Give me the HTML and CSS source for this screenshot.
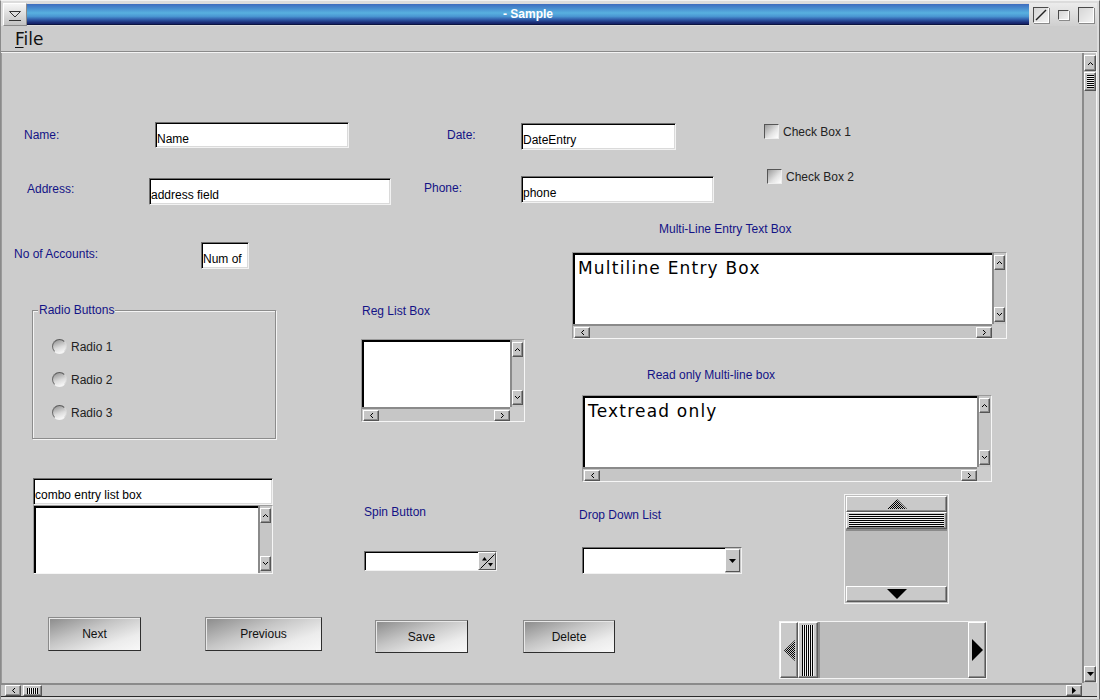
FILE: index.html
```html
<!DOCTYPE html>
<html>
<head>
<meta charset="utf-8">
<title>Sample</title>
<link rel="stylesheet" href="styles.css">
</head>
<body>
<svg class="defs" width="0" height="0" aria-hidden="true">
  <defs>
    <pattern id="dither" width="2" height="2" patternUnits="userSpaceOnUse">
      <rect width="2" height="2" fill="#c8c8c8"/>
      <rect width="1" height="1" fill="#000"/>
      <rect x="1" y="1" width="1" height="1" fill="#000"/>
    </pattern>
    <symbol id="chev-up" viewBox="0 0 7 5"><path d="M1 4 L3.5 1.5 L6 4" stroke="#000" stroke-width="1" fill="none"/></symbol>
    <symbol id="chev-down" viewBox="0 0 7 5"><path d="M1 1 L3.5 3.5 L6 1" stroke="#000" stroke-width="1" fill="none"/></symbol>
    <symbol id="chev-left" viewBox="0 0 5 7"><path d="M4 1 L1.5 3.5 L4 6" stroke="#000" stroke-width="1" fill="none"/></symbol>
    <symbol id="chev-right" viewBox="0 0 5 7"><path d="M1 1 L3.5 3.5 L1 6" stroke="#000" stroke-width="1" fill="none"/></symbol>
    <symbol id="tri-down" viewBox="0 0 7 4"><path d="M0 0 H7 L3.5 4 Z" fill="#000"/></symbol>
    <symbol id="tri-right" viewBox="0 0 4 7"><path d="M0 0 V7 L4 3.5 Z" fill="#000"/></symbol>
  </defs>
</svg>

<div class="window">
  <div class="titlebar">
    <div class="tb-menu">
      <svg width="22" height="21" viewBox="0 0 22 21"><path d="M5.5 7.5 H16.5 L11 13 Z" fill="none" stroke="#333" stroke-width="1"/><path d="M5 16.5 H17" stroke="#333" stroke-width="1"/></svg>
    </div>
    <div class="tb-title">- Sample</div>
    <div class="tb-btns">
      <div class="tb-btn tb-shade"><svg width="14" height="14" viewBox="0 0 14 14"><path d="M2 12 L12 2" stroke="#222" stroke-width="1.4"/></svg></div>
      <div class="tb-btn tb-min"></div>
      <div class="tb-btn tb-max"></div>
    </div>
  </div>

  <div class="menubar"><span class="menu-item"><span class="mnemonic">F</span>ile</span></div>
  <div class="menusep"></div>

  <div class="viewport">
    <div class="canvas">
      <div class="row row1">
        <div class="lbl l-name">Name:</div>
        <div class="field f-name">Name</div>
        <div class="lbl l-date">Date:</div>
        <div class="field f-date">DateEntry</div>
        <div class="check c1"><span class="cbox"></span><span class="ctext">Check Box 1</span></div>
      </div>

      <div class="row row2">
        <div class="lbl l-addr">Address:</div>
        <div class="field f-addr">address field</div>
        <div class="lbl l-phone">Phone:</div>
        <div class="field f-phone">phone</div>
        <div class="check c2"><span class="cbox"></span><span class="ctext">Check Box 2</span></div>
      </div>

      <div class="mid">
        <div class="col col-l">
          <div class="acc-row">
            <div class="lbl l-acc">No of Accounts:</div>
            <div class="field f-acc">Num of</div>
          </div>
          <div class="group">
            <span class="legend">Radio Buttons</span>
            <div class="radio"><span class="rdot"></span><span class="ctext">Radio 1</span></div>
            <div class="radio"><span class="rdot"></span><span class="ctext">Radio 2</span></div>
            <div class="radio"><span class="rdot"></span><span class="ctext">Radio 3</span></div>
          </div>
          <div class="combo">
            <div class="field f-combo">combo entry list box</div>
            <div class="pane pane-combo">
              <div class="pane-text"></div>
              <div class="pane-v">
                <span class="sb sb-v"><svg width="7" height="5"><use href="#chev-up"/></svg></span>
                <span class="sb sb-v"><svg width="7" height="5"><use href="#chev-down"/></svg></span>
              </div>
            </div>
          </div>
        </div>

        <div class="col col-m">
          <div class="lbl l-reg">Reg List Box</div>
          <div class="pane pane-reg">
            <div class="pane-text"></div>
            <div class="pane-v">
              <span class="sb sb-v"><svg width="7" height="5"><use href="#chev-up"/></svg></span>
              <span class="sb sb-v"><svg width="7" height="5"><use href="#chev-down"/></svg></span>
            </div>
            <div class="pane-h">
              <span class="sb sb-h"><svg width="5" height="7"><use href="#chev-left"/></svg></span>
              <span class="sb sb-h"><svg width="5" height="7"><use href="#chev-right"/></svg></span>
            </div>
            <div class="pane-corner"></div>
          </div>
          <div class="lbl l-spin">Spin Button</div>
          <div class="spin">
            <div class="spin-text"></div>
            <div class="spin-btn"><svg width="15" height="15" viewBox="0 0 15 15"><path d="M0.5 14.5 L14.5 0.5" stroke="#000" stroke-width="1"/><path d="M2 6.5 L4.5 3 L7 6.5 Z" fill="#000"/><path d="M8 9 H13 L10.5 12.5 Z" fill="#000"/></svg></div>
          </div>
        </div>

        <div class="col col-r">
          <div class="lbl l-ml">Multi-Line Entry Text Box</div>
          <div class="pane pane-ml">
            <div class="pane-text big">Multiline Entry Box</div>
            <div class="pane-v">
              <span class="sb sb-v"><svg width="7" height="5"><use href="#chev-up"/></svg></span>
              <span class="sb sb-v"><svg width="7" height="5"><use href="#chev-down"/></svg></span>
            </div>
            <div class="pane-h">
              <span class="sb sb-h"><svg width="5" height="7"><use href="#chev-left"/></svg></span>
              <span class="sb sb-h"><svg width="5" height="7"><use href="#chev-right"/></svg></span>
            </div>
            <div class="pane-corner"></div>
          </div>
          <div class="lbl l-ro">Read only Multi-line box</div>
          <div class="pane pane-ro">
            <div class="pane-text big">Textread only</div>
            <div class="pane-v">
              <span class="sb sb-v"><svg width="7" height="5"><use href="#chev-up"/></svg></span>
              <span class="sb sb-v"><svg width="7" height="5"><use href="#chev-down"/></svg></span>
            </div>
            <div class="pane-h">
              <span class="sb sb-h"><svg width="5" height="7"><use href="#chev-left"/></svg></span>
              <span class="sb sb-h"><svg width="5" height="7"><use href="#chev-right"/></svg></span>
            </div>
            <div class="pane-corner"></div>
          </div>
          <div class="sub">
            <div class="dd-col">
              <div class="lbl l-dd">Drop Down List</div>
              <div class="dropdown">
                <div class="dd-text"></div>
                <div class="dd-btn"><svg width="7" height="4"><use href="#tri-down"/></svg></div>
              </div>
            </div>
            <div class="bigv">
              <div class="big-btn bv-btn"><svg width="20" height="10" viewBox="0 0 20 10"><path d="M0 10 L10 0 L20 10 Z" fill="url(#dither)"/></svg></div>
              <div class="big-btn bv-thumb"><span class="hstripes"></span></div>
              <div class="bv-track"></div>
              <div class="big-btn bv-btn"><svg width="20" height="10" viewBox="0 0 20 10"><path d="M0 0 H20 L10 10 Z" fill="#000"/></svg></div>
            </div>
          </div>
        </div>
      </div>

      <div class="row row-btns">
        <div class="btn btn-next">Next</div>
        <div class="btn btn-prev">Previous</div>
        <div class="btn btn-save">Save</div>
        <div class="btn btn-del">Delete</div>
        <div class="bigh">
          <div class="big-btn bh-btn"><svg width="11" height="21" viewBox="0 0 11 21"><path d="M11 0 V21 L0 10.5 Z" fill="url(#dither)"/></svg></div>
          <div class="big-btn bh-thumb"><span class="vstripes"></span></div>
          <div class="bh-track"></div>
          <div class="big-btn bh-btn"><svg width="11" height="22" viewBox="0 0 11 22"><path d="M0 0 V22 L11 11 Z" fill="#000"/></svg></div>
        </div>
      </div>
    </div>

    <div class="vbar">
      <span class="sb sb-main-v"><svg width="7" height="5"><use href="#chev-up"/></svg></span>
      <span class="sb sb-main-thumb"><span class="hstripes small"></span></span>
      <span class="vbar-fill"></span>
      <span class="sb sb-main-v"><svg width="7" height="4"><use href="#tri-down"/></svg></span>
    </div>
  </div>

  <div class="hbar-row">
    <div class="hbar">
      <span class="sb sb-main-h"><svg width="5" height="7"><use href="#chev-left"/></svg></span>
      <span class="sb sb-main-hthumb"><span class="vstripes small"></span></span>
      <span class="hbar-fill"></span>
      <span class="sb sb-main-h"><svg width="4" height="7"><use href="#tri-right"/></svg></span>
    </div>
    <div class="corner"></div>
  </div>
</div>
</body>
</html>
```

FILE: styles.css
```css
* { box-sizing: border-box; }

html, body {
  margin: 0;
  padding: 0;
  background: #cccccc;
  font-family: "Liberation Sans", Arial, sans-serif;
}

.defs { position: absolute; width: 0; height: 0; overflow: hidden; }

.window {
  width: 1100px;
  height: 700px;
  display: flex;
  flex-direction: column;
  background: #dcdcdc;
  border-top: 1px solid #f2f2f2;
  border-left: 1px solid #8a8a8a;
  border-right: 1px solid #6a6a6a;
  border-bottom: 1px solid #bdbdbd;
  padding: 2px 2px 2px 0;
  overflow: hidden;
}

/* ---------- title bar ---------- */
.titlebar {
  height: 23px;
  display: flex;
  flex-shrink: 0;
}
.tb-menu {
  width: 24px;
  height: 23px;
  margin-left: 2px;
  background: linear-gradient(to bottom, #f6f6f6, #c2c2c2);
  border: 1px solid;
  border-color: #ffffff #8a8a8a #8a8a8a #ffffff;
  display: flex;
  align-items: center;
  justify-content: center;
}
.tb-title {
  flex: 1;
  margin: 1px 0;
  background: linear-gradient(to bottom, #3d6cbe 0%, #4a92d2 25%, #58b0df 45%, #4a96d2 62%, #2f5aa8 78%, #1c2f78 92%, #142066 100%);
  color: #ffffff;
  font-weight: bold;
  font-size: 12px;
  line-height: 21px;
  text-align: center;
  border-bottom: 1px solid #0c1440;
}
.tb-btns {
  width: 68px;
  display: flex;
  align-items: center;
  background: linear-gradient(to bottom, #ececec, #cfcfcf);
}
.tb-btn {
  border: 1px solid;
  border-color: #4a4a4a #ffffff #ffffff #4a4a4a;
  box-shadow: 1px 1px 0 #8a8a8a;
  background: linear-gradient(135deg, #d6d6d6, #f2f2f2);
  display: flex;
  align-items: center;
  justify-content: center;
}
.tb-shade { width: 16px; height: 16px; margin-left: 4px; }
.tb-min { width: 11px; height: 10px; margin-left: 9px; }
.tb-max { width: 16px; height: 16px; margin-left: 9px; }

/* ---------- menu ---------- */
.menubar {
  height: 25px;
  flex-shrink: 0;
  background: #cccccc;
  padding-left: 14px;
  display: flex;
  align-items: center;
}
.menu-item {
  font-family: "DejaVu Sans", sans-serif;
  font-size: 17px;
  color: #111111;
}
.mnemonic { text-decoration: underline; text-underline-offset: 2px; }
.menusep {
  height: 2px;
  flex-shrink: 0;
  border-top: 1px solid #8a8a8a;
  border-bottom: 1px solid #f4f4f4;
}

/* ---------- viewport ---------- */
.viewport {
  height: 630px;
  display: flex;
  flex-shrink: 0;
}
.canvas {
  width: 1081px;
  height: 630px;
  flex-shrink: 0;
  background: #cccccc;
  overflow: hidden;
  border-left: 1px solid #9a9a9a;
}

.row { display: flex; align-items: flex-start; }
.lbl {
  font-size: 12px;
  line-height: 14px;
  color: #131386;
  white-space: nowrap;
}

.field {
  background: #ffffff;
  border: 1px solid;
  border-color: #6e6e6e #f2f2f2 #f2f2f2 #6e6e6e;
  box-shadow: inset 1px 1px 0 #000000, inset -1px -1px 0 #dadada;
  font-size: 12px;
  line-height: 14px;
  color: #000000;
  padding: 9px 0 0 1px;
  white-space: nowrap;
  overflow: hidden;
}

/* row 1 */
.row1 { height: 29px; margin-top: 68px; }
.l-name { margin-left: 22px; width: 131px; margin-top: 7px; }
.f-name { width: 194px; height: 26px; margin-top: 1px; }
.l-date { margin-left: 98px; width: 74px; margin-top: 7px; }
.f-date { width: 155px; height: 27px; margin-top: 2px; }
.c1 { margin-left: 88px; margin-top: 3px; }

/* row 2 */
.row2 { height: 37px; margin-top: 18px; }
.l-addr { margin-left: 25px; width: 122px; margin-top: 14px; }
.f-addr { width: 242px; height: 27px; margin-top: 10px; }
.l-phone { margin-left: 33px; width: 97px; margin-top: 13px; }
.f-phone { width: 193px; height: 27px; margin-top: 8px; }
.c2 { margin-left: 53px; margin-top: 1px; }

/* checkboxes / radios */
.check, .radio {
  display: flex;
  align-items: center;
  height: 15px;
  font-size: 12px;
  color: #222222;
  white-space: nowrap;
}
.cbox {
  width: 15px;
  height: 15px;
  margin-right: 4px;
  border: 1px solid;
  border-color: #555555 #eeeeee #eeeeee #555555;
  background: linear-gradient(135deg, #9c9c9c 0%, #e4e4e4 60%, #ffffff 100%);
}
.rdot {
  width: 15px;
  height: 15px;
  margin-right: 4px;
  border-radius: 50%;
  border: 1px solid;
  border-color: #5a5a5a #d8d8d8 #f4f4f4 #6a6a6a;
  background: linear-gradient(160deg, #8e8e8e 0%, #dcdcdc 55%, #ffffff 100%);
}
.ctext { line-height: 14px; }

/* middle block */
.mid { display: flex; align-items: flex-start; margin-top: 16px; height: 384px; }
.col { flex-shrink: 0; }

.col-l { margin-left: 12px; width: 262px; }
.acc-row { display: flex; align-items: flex-start; margin-top: 21px; }
.l-acc { width: 187px; margin-top: 5px; }
.f-acc { width: 48px; height: 27px; }

.group {
  position: relative;
  margin-left: 18px;
  margin-top: 41px;
  width: 244px;
  height: 129px;
  border: 1px solid #8c8c8c;
  box-shadow: inset 1px 1px 0 #f4f4f4, 1px 1px 0 #f4f4f4;
  padding: 28px 0 0 19px;
}
.legend {
  position: absolute;
  top: -8px;
  left: 5px;
  padding: 0 1px;
  background: #cccccc;
  font-size: 12px;
  line-height: 14px;
  color: #131386;
}
.radio { margin-bottom: 18px; }

.combo { margin-left: 19px; margin-top: 39px; width: 240px; }
.f-combo { height: 27px; padding-top: 9px; }

/* panes with scrollbars */
.pane {
  display: grid;
  grid-template-columns: 1fr 14px;
  grid-template-rows: 1fr 14px;
  background: #c6c6c6;
  border: 1px solid;
  border-color: #9a9a9a #f6f6f6 #f6f6f6 #9a9a9a;
}
.pane-text {
  background: #ffffff;
  border-top: 2px solid #000000;
  border-left: 2px solid #000000;
  overflow: hidden;
  white-space: nowrap;
}
.pane-text.big {
  font-family: "DejaVu Sans", sans-serif;
  font-size: 17px;
  line-height: 20px;
  letter-spacing: 1.2px;
  color: #000000;
  padding: 3px 0 0 3px;
}
.pane-v {
  border-left: 2px solid #8a8a8a;
  display: flex;
  flex-direction: column;
  justify-content: space-between;
  align-items: flex-start;
  padding: 2px 0 2px 0;
}
.pane-h {
  border-top: 2px solid #8a8a8a;
  display: flex;
  justify-content: space-between;
  align-items: flex-start;
  padding: 0 0 0 1px;
}
.pane-corner { background: #cccccc; }

.sb {
  display: flex;
  align-items: center;
  justify-content: center;
  background: #c6c6c6;
  border: 1px solid;
  border-color: #ffffff #555555 #555555 #ffffff;
  box-shadow: inset -1px -1px 0 #8a8a8a;
}
.sb svg { display: block; }
.sb-v { width: 11px; height: 15px; }
.sb-h { width: 16px; height: 11px; margin-top: 1px; }

.pane-combo { height: 69px; grid-template-rows: 1fr; }

.col-m { margin-left: 85px; width: 164px; }
.l-reg { margin-left: 1px; margin-top: 83px; }
.pane-reg { margin-top: 21px; height: 83px; }
.l-spin { margin-left: 3px; margin-top: 83px; }
.spin {
  margin-left: 3px;
  margin-top: 32px;
  width: 133px;
  height: 20px;
  display: flex;
  border: 1px solid;
  border-color: #6e6e6e #f2f2f2 #f2f2f2 #6e6e6e;
  background: #c6c6c6;
}
.spin-text {
  flex: 1;
  background: #ffffff;
  border-top: 1px solid #000;
  border-left: 1px solid #000;
}
.spin-btn {
  width: 18px;
  display: flex;
  align-items: center;
  justify-content: center;
  background: #c6c6c6;
  border: 1px solid;
  border-color: #ffffff #555555 #555555 #ffffff;
}

.col-r { margin-left: 47px; width: 435px; }
.l-ml { margin-left: 87px; margin-top: 1px; }
.pane-ml { margin-top: 16px; height: 87px; }
.l-ro { margin-left: 75px; margin-top: 29px; }
.pane-ro { margin-left: 10px; margin-top: 13px; width: 410px; height: 87px; }

.sub { display: flex; align-items: flex-start; }
.dd-col { margin-left: 7px; width: 163px; flex-shrink: 0; }
.l-dd { margin-top: 26px; }
.dropdown {
  margin-left: 3px;
  margin-top: 25px;
  width: 160px;
  height: 27px;
  display: flex;
  border: 1px solid;
  border-color: #6e6e6e #f2f2f2 #f2f2f2 #6e6e6e;
  background: #c6c6c6;
}
.dd-text {
  flex: 1;
  background: #ffffff;
  border-top: 1px solid #000;
  border-left: 1px solid #000;
}
.dd-btn {
  width: 15px;
  margin: 1px 1px 1px 0;
  display: flex;
  align-items: center;
  justify-content: center;
  background: #c6c6c6;
  border: 1px solid;
  border-color: #ffffff #555555 #555555 #ffffff;
}

/* big scrollbars */
.bigv {
  margin-left: 102px;
  margin-top: 12px;
  width: 105px;
  height: 110px;
  flex-shrink: 0;
  display: flex;
  flex-direction: column;
  border: 1px solid #f4f4f4;
  background: #bcbcbc;
  padding: 1px;
}
.big-btn {
  background: #c9c9c9;
  border: 1px solid;
  border-color: #ffffff #5a5a5a #5a5a5a #ffffff;
  box-shadow: inset -1px -1px 0 #8a8a8a;
  display: flex;
  align-items: center;
  justify-content: center;
}
.bv-btn { height: 16px; }
.bv-btn svg { display: block; }
.bv-thumb { height: 17px; }
.hstripes {
  display: block;
  width: 95px;
  height: 13px;
  background: repeating-linear-gradient(to bottom, #000 0 1px, #f0f0f0 1px 2px);
}
.bv-track {
  flex: 1;
  background: #bcbcbc;
  border-top: 2px solid #8a8a8a;
}

.bigh {
  margin-left: 164px;
  margin-top: 4px;
  width: 208px;
  height: 58px;
  flex-shrink: 0;
  display: flex;
  border: 1px solid #f4f4f4;
  background: #bcbcbc;
}
.bh-btn { width: 18px; }
.bh-thumb { width: 20px; }
.vstripes {
  display: block;
  width: 12px;
  height: 51px;
  background: repeating-linear-gradient(to right, #000 0 1px, #f0f0f0 1px 2px);
}
.bh-track {
  flex: 1;
  background: #bcbcbc;
  border-left: 2px solid #8a8a8a;
}

/* buttons */
.btn {
  display: flex;
  align-items: center;
  justify-content: center;
  font-size: 12px;
  color: #111111;
  border: 1px solid;
  border-color: #8a8a8a #2e2e2e #2e2e2e #8a8a8a;
  box-shadow: inset 1px 1px 0 #e8e8e8;
  background: linear-gradient(160deg, #8a8a8a 0%, #c4c4c4 40%, #ececec 75%, #f8f8f8 100%);
  flex-shrink: 0;
}
.btn-next { margin-left: 46px; width: 93px; height: 34px; }
.btn-prev { margin-left: 64px; width: 117px; height: 34px; }
.btn-save { margin-left: 53px; margin-top: 3px; width: 93px; height: 33px; }
.btn-del { margin-left: 55px; margin-top: 3px; width: 92px; height: 33px; }
.row-btns { margin-top: 12px; }

/* main scrollbars */
.vbar {
  width: 15px;
  height: 630px;
  flex-shrink: 0;
  display: flex;
  flex-direction: column;
  align-items: flex-start;
  background: #c4c4c4;
  border-left: 2px solid #8a8a8a;
  border-right: 1px solid #f4f4f4;
  padding: 2px 0 1px 0;
}
.sb-main-v { width: 12px; height: 16px; }
.sb-main-thumb { width: 12px; height: 19px; margin-top: 1px; }
.hstripes.small { width: 7px; height: 13px; }
.vbar-fill { flex: 1; }

.hbar-row {
  height: 14px;
  display: flex;
  flex-shrink: 0;
}
.hbar {
  width: 1081px;
  flex-shrink: 0;
  display: flex;
  align-items: flex-start;
  background: #c4c4c4;
  border-top: 2px solid #8a8a8a;
  border-bottom: 1px solid #2a2a2a;
  padding-left: 4px;
}
.sb-main-h { width: 16px; height: 11px; }
.sb-main-hthumb { width: 19px; height: 11px; margin-left: 2px; }
.vstripes.small { width: 11px; height: 6px; }
.hbar-fill { flex: 1; }
.corner {
  width: 15px;
  background: #cccccc;
  border-bottom: 1px solid #2a2a2a;
}
```
